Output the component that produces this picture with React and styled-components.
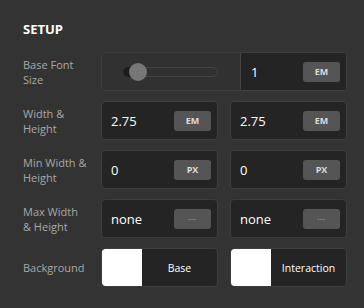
import React from "react";
import styled, { createGlobalStyle } from "styled-components";

const Global = createGlobalStyle`
  html, body { margin: 0; padding: 0; background: #333333; }
  body { font-family: "Open Sans", "Noto Sans", sans-serif; }
`;

const Panel = styled.div`
  width: 364px;
  height: 308px;
  box-sizing: border-box;
  padding: 19px 17px 0 23px;
  background: #333333;
`;

const Title = styled.h2`
  margin: 0 0 13px 0;
  font-size: 13px;
  line-height: 20px;
  font-weight: 700;
  color: #ffffff;
  letter-spacing: 0;
`;

const Grid = styled.div`
  display: grid;
  grid-template-columns: 66px 117px 117px;
  grid-auto-rows: 39px;
  column-gap: 12px;
  row-gap: 10px;
`;

const Label = styled.div`
  display: flex;
  align-items: center;
  font-size: 11px;
  line-height: 15px;
  color: #a8a8a8;
`;

const Cell = styled.div`
  box-sizing: border-box;
  display: flex;
  align-items: center;
  border: 1px solid #3e3e3e;
  border-radius: 4px;
  background: #242424;
  padding: 0 6px 0 9px;
  overflow: hidden;
`;

const Value = styled.span`
  flex: 1;
  font-size: 13px;
  color: #ffffff;
`;

const Unit = styled.div`
  width: 37px;
  height: 20px;
  border-radius: 3px;
  background: #555555;
  display: flex;
  align-items: center;
  justify-content: center;
  font-size: ${(p) => (p.$dim ? "7px" : "9px")};
  font-weight: 700;
  color: ${(p) => (p.$dim ? "#8a8a8a" : "#dcdcdc")};
  letter-spacing: ${(p) => (p.$dim ? "0.5px" : "0")};
`;

const SliderRow = styled.div`
  grid-column: 2 / 4;
  box-sizing: border-box;
  display: flex;
  border: 1px solid #3e3e3e;
  border-radius: 4px;
  overflow: hidden;
`;

const SliderArea = styled.div`
  width: 139px;
  box-sizing: border-box;
  display: flex;
  align-items: center;
  padding-left: 21px;
  background: #313131;
  border-right: 1px solid #454545;
`;

const Track = styled.div`
  position: relative;
  width: 95px;
  height: 10px;
  box-sizing: border-box;
  border: 1px solid #444444;
  border-radius: 5px;
`;

const Fill = styled.div`
  position: absolute;
  left: -1px;
  top: -1px;
  height: 10px;
  border-radius: 5px;
  background: #1b1b1b;
`;

const Thumb = styled.div`
  position: absolute;
  top: 50%;
  width: 18px;
  height: 18px;
  margin-top: -9px;
  border-radius: 50%;
  background: #777777;
`;

const NumberArea = styled.div`
  flex: 1;
  display: flex;
  align-items: center;
  background: #242424;
  padding: 0 6px 0 10px;
`;

const ColorButton = styled.div`
  box-sizing: border-box;
  display: flex;
  border: 1px solid #3e3e3e;
  border-radius: 4px;
  background: #242424;
  overflow: hidden;
`;

const Swatch = styled.div`
  width: 40px;
  background: ${(p) => p.$color};
  border-radius: 3px 0 0 3px;
`;

const ColorName = styled.span`
  flex: 1;
  display: flex;
  align-items: center;
  justify-content: center;
  font-size: 10.5px;
  color: #ffffff;
`;

const Input = ({ value, unit }) => (
  <Cell>
    <Value>{value}</Value>
    <Unit $dim={unit === "---"}>{unit}</Unit>
  </Cell>
);

const rows = [
  { label: ["Width &", "Height"], a: ["2.75", "EM"], b: ["2.75", "EM"] },
  { label: ["Min Width &", "Height"], a: ["0", "PX"], b: ["0", "PX"] },
  { label: ["Max Width", "& Height"], a: ["none", "---"], b: ["none", "---"] },
];

export default function App() {
  return (
    <>
      <Global />
      <Panel>
        <Title>SETUP</Title>
        <Grid>
          <Label>
            Base Font
            <br />
            Size
          </Label>
          <SliderRow>
            <SliderArea>
              <Track>
                <Fill style={{ width: "16px" }} />
                <Thumb style={{ left: "5px" }} />
              </Track>
            </SliderArea>
            <NumberArea>
              <Value>1</Value>
              <Unit>EM</Unit>
            </NumberArea>
          </SliderRow>
          {rows.map((r) => (
            <React.Fragment key={r.label.join(" ")}>
              <Label>
                {r.label[0]}
                <br />
                {r.label[1]}
              </Label>
              <Input value={r.a[0]} unit={r.a[1]} />
              <Input value={r.b[0]} unit={r.b[1]} />
            </React.Fragment>
          ))}
          <Label>Background</Label>
          <ColorButton>
            <Swatch $color="#ffffff" />
            <ColorName>Base</ColorName>
          </ColorButton>
          <ColorButton>
            <Swatch $color="#ffffff" />
            <ColorName>Interaction</ColorName>
          </ColorButton>
        </Grid>
      </Panel>
    </>
  );
}
